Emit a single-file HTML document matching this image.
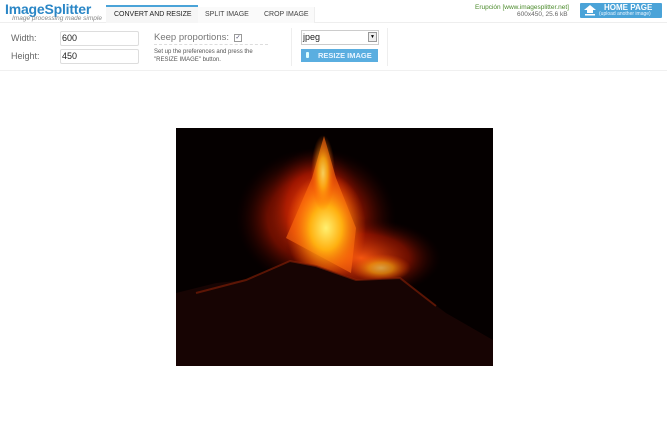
<!DOCTYPE html>
<html><head><style>
body{margin:0;width:667px;height:422px;background:#fff;font-family:"Liberation Sans",sans-serif;position:relative;overflow:hidden}
.a{position:absolute;white-space:nowrap}
</style></head><body>
<div class="a" style="left:0;top:22px;width:667px;height:1px;background:#eee"></div>
<div class="a" style="left:0;top:70px;width:667px;height:1px;background:#f0f0f0"></div>
<div class="a" style="left:5px;top:1px;font-size:14px;font-weight:bold;color:#2a86c6;letter-spacing:-0.2px">ImageSplitter</div>
<div class="a" style="left:12px;top:15px;font-size:6.5px;font-style:italic;color:#888">Image processing made simple</div>
<div class="a" style="left:106px;top:5px;width:92px;height:2px;background:#4aa3d8"></div>
<div class="a" style="left:106px;top:7px;width:92px;height:16px;background:#f6f6f6;border-right:1px solid #eee"></div>
<div class="a" style="left:114px;top:11px;font-size:7px;color:#222">CONVERT AND RESIZE</div>
<div class="a" style="left:198px;top:7px;width:58px;height:16px;background:#fafafa;border-right:1px solid #eee"></div>
<div class="a" style="left:205px;top:11px;font-size:7px;color:#444">SPLIT IMAGE</div>
<div class="a" style="left:256px;top:7px;width:58px;height:16px;background:#fafafa;border-right:1px solid #eee"></div>
<div class="a" style="left:264px;top:11px;font-size:7px;color:#444">CROP IMAGE</div>
<div class="a" style="left:475px;top:4px;font-size:6.5px;color:#4a8a2a">Erupción [www.imagesplitter.net]</div>
<div class="a" style="left:517px;top:11px;font-size:6.5px;color:#666">600x450, 25.6 kB</div>
<div class="a" style="left:580px;top:3px;width:82px;height:15px;background:#4aa3d8;border-radius:1px"></div>
<svg class="a" style="left:584px;top:5px" width="12" height="11"><path d="M6 0L0 5H3V8H9V5H12Z" fill="#fff"/><rect x="1" y="9" width="10" height="1.5" fill="#fff"/></svg>
<div class="a" style="left:604px;top:3px;font-size:8px;font-weight:bold;color:#fff">HOME PAGE</div>
<div class="a" style="left:599px;top:11px;font-size:5px;color:#e8f4ff">(upload another image)</div>
<div class="a" style="left:11px;top:33px;font-size:9px;color:#666">Width:</div>
<div class="a" style="left:11px;top:51px;font-size:9px;color:#666">Height:</div>
<div class="a" style="left:60px;top:31px;width:77px;height:13px;border:1px solid #ddd;border-radius:2px"></div>
<div class="a" style="left:62px;top:33px;font-size:9px;color:#222">600</div>
<div class="a" style="left:60px;top:49px;width:77px;height:13px;border:1px solid #ddd;border-radius:2px"></div>
<div class="a" style="left:62px;top:51px;font-size:9px;color:#222">450</div>
<div class="a" style="left:154px;top:32px;font-size:9.5px;color:#777">Keep proportions:</div>
<div class="a" style="left:234px;top:34px;width:6px;height:6px;border:1px solid #999;font-size:6px;line-height:6px;text-align:center;color:#446">✓</div>
<div class="a" style="left:154px;top:44px;width:114px;border-top:1px dashed #ddd"></div>
<div class="a" style="left:154px;top:48px;font-size:6px;color:#555;line-height:8px">Set up the preferences and press the<br>"RESIZE IMAGE" button.</div>
<div class="a" style="left:291px;top:28px;width:1px;height:38px;background:#eee"></div>
<div class="a" style="left:387px;top:28px;width:1px;height:38px;background:#eee"></div>
<div class="a" style="left:301px;top:30px;width:76px;height:13px;border:1px solid #ccc"></div>
<div class="a" style="left:303px;top:32px;font-size:9px;color:#222">jpeg</div>
<div class="a" style="left:368px;top:32px;width:7px;height:8px;border:1px solid #999;background:#eee;font-size:5px;text-align:center;line-height:8px">▼</div>
<div class="a" style="left:301px;top:49px;width:77px;height:13px;background:#5aaee0"></div>
<div class="a" style="left:306px;top:52px;width:3px;height:6px;background:#dff;border-radius:1px"></div>
<div class="a" style="left:318px;top:51px;font-size:7.5px;font-weight:bold;color:#e8f4ff">RESIZE IMAGE</div>
<svg class="a" style="left:176px;top:128px" width="317" height="238" viewBox="0 0 317 238">
<defs>
<radialGradient id="g1" cx="0.5" cy="0.5" r="0.5"><stop offset="0" stop-color="#ff5a10" stop-opacity="0.95"/><stop offset="0.6" stop-color="#c21a00" stop-opacity="0.55"/><stop offset="1" stop-color="#300" stop-opacity="0"/></radialGradient>
<radialGradient id="g2" cx="0.5" cy="0.5" r="0.5"><stop offset="0" stop-color="#fff070"/><stop offset="0.4" stop-color="#ffb010"/><stop offset="1" stop-color="#ff5000" stop-opacity="0"/></radialGradient>
</defs>
<rect width="317" height="238" fill="#050000"/>
<ellipse cx="140" cy="90" rx="80" ry="70" fill="url(#g1)"/>
<ellipse cx="185" cy="130" rx="80" ry="40" fill="url(#g1)"/>
<ellipse cx="140" cy="80" rx="50" ry="60" fill="url(#g1)"/>
<path d="M148 8 L136 50 L110 110 L175 145 L180 100 L160 50Z" fill="#ff6a10" opacity="0.6"/>
<ellipse cx="150" cy="100" rx="40" ry="55" fill="url(#g2)"/>
<ellipse cx="147" cy="45" rx="12" ry="38" fill="url(#g2)" opacity="0.8"/>
<ellipse cx="205" cy="140" rx="30" ry="14" fill="url(#g2)" opacity="0.6"/>
<path d="M0 165 L40 155 L70 152 L114 133 L140 138 L180 152 L224 150 L270 185 L317 212 L317 238 L0 238Z" fill="#170403"/>
<path d="M20 165 L70 152 L114 133 L140 138 L180 152 L224 150 L260 178" fill="none" stroke="#8a2206" stroke-width="2" opacity="0.6"/>
</svg>
</body></html>
